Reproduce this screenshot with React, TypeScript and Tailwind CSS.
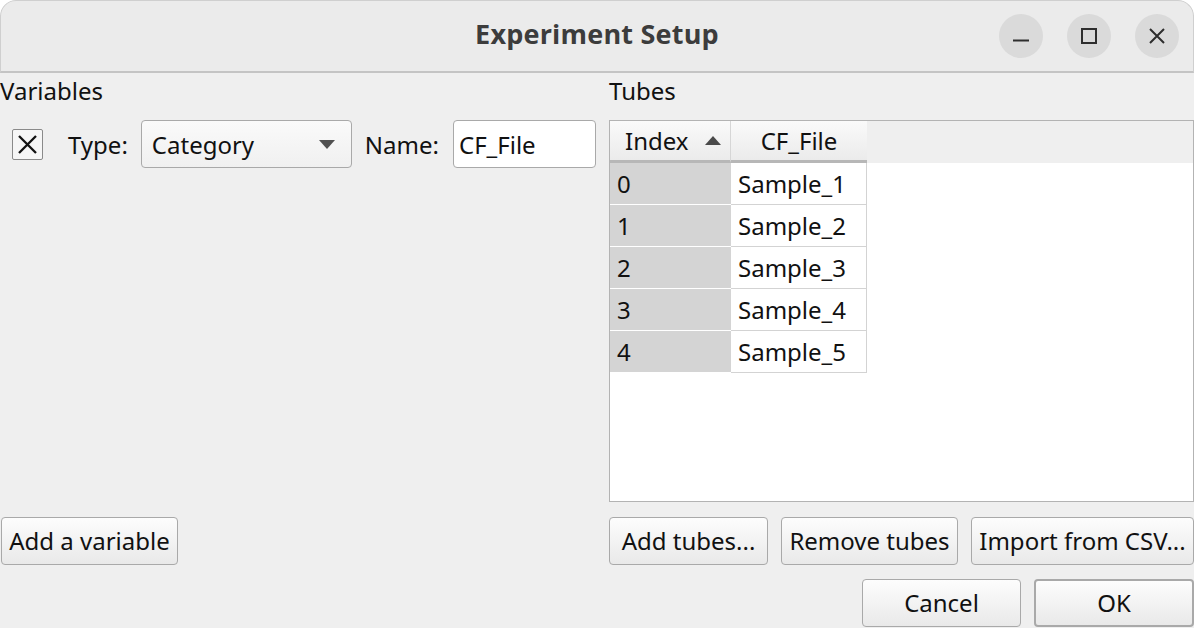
import React from "react";

const rows = ["Sample_1", "Sample_2", "Sample_3", "Sample_4", "Sample_5"];

const btn =
  "h-[48px] shrink-0 rounded-[4px] border border-[#a9a9a9] bg-gradient-to-b from-[#fdfdfd] to-[#e9e9e9] text-[24px] leading-none text-[#111] flex items-center justify-center";

const WinButton: React.FC<{ children: React.ReactNode }> = ({ children }) => (
  <div className="w-[44px] h-[44px] rounded-full bg-[#dadada] flex items-center justify-center">{children}</div>
);

const App: React.FC = () => {
  return (
    <div className="w-[1194px] h-[628px] bg-white overflow-hidden" style={{ fontFamily: '"Noto Sans", "Open Sans", sans-serif' }}>
      <div className="w-full h-full rounded-t-[16px] bg-[#efefef] overflow-hidden flex flex-col">
        {/* title bar */}
        <div className="h-[73px] shrink-0 bg-[#ebebeb] border-b-2 border-[#c4c4c4] rounded-t-[16px] border-t border-x border-t-[#cfcfcf] border-x-[#cfcfcf] relative flex items-center justify-center pb-[3px]">
          <span className="text-[27px] font-bold text-[#3c3c3c] tracking-[0.2px]" style={{ fontFamily: '"Open Sans", "Noto Sans", sans-serif' }}>
            Experiment Setup
          </span>
          <div className="absolute right-[14px] top-[13px] flex gap-[24px]">
            <WinButton>
              <svg width="18" height="18" viewBox="0 0 18 18">
                <line x1="1" y1="13.5" x2="17" y2="13.5" stroke="#2e2e2e" strokeWidth="2" />
              </svg>
            </WinButton>
            <WinButton>
              <svg width="18" height="18" viewBox="0 0 18 18">
                <rect x="2" y="2" width="14" height="14" fill="none" stroke="#2e2e2e" strokeWidth="2" />
              </svg>
            </WinButton>
            <WinButton>
              <svg width="18" height="18" viewBox="0 0 18 18">
                <path d="M2 2 L16 16 M16 2 L2 16" stroke="#2e2e2e" strokeWidth="2" />
              </svg>
            </WinButton>
          </div>
        </div>

        {/* body */}
        <div className="flex h-[492px] text-[24px] text-[#111]">
          {/* left */}
          <div className="w-[609px] shrink-0 flex flex-col">
            <div className="h-[36px] mb-[11px] flex items-center">Variables</div>
            <div className="h-[48px] flex items-center">
              <div className="ml-[12px] w-[31px] h-[31px] border border-[#8a8a8a] rounded-[2px] bg-[#f6f6f6] flex items-center justify-center">
                <svg width="23" height="23" viewBox="0 0 23 23">
                  <path d="M3 3 L20 20 M20 3 L3 20" stroke="#111" strokeWidth="2.3" />
                </svg>
              </div>
              <span className="ml-[25px] pt-[2px]">Type:</span>
              <div className="ml-[13px] w-[211px] h-[48px] rounded-[4px] border border-[#a9a9a9] bg-gradient-to-b from-[#fafafa] to-[#f0f0f0] flex items-center pl-[10px] pr-[16px] justify-between">
                <span className="pt-[2px]">Category</span>
                <svg width="16" height="9" viewBox="0 0 16 9">
                  <path d="M0 0 L16 0 L8 9 Z" fill="#505050" />
                </svg>
              </div>
              <span className="ml-[13px] pt-[2px]">Name:</span>
              <div className="ml-[14px] w-[143px] h-[48px] rounded-[4px] border border-[#a9a9a9] bg-white flex items-center pl-[5px] pt-[2px]">CF_File</div>
            </div>
            <div className="flex-1" />
            <div className={btn + " ml-[1px] w-[177px]"}>Add a variable</div>
          </div>

          {/* right */}
          <div className="w-[585px] shrink-0 flex flex-col">
            <div className="h-[36px] mb-[11px] flex items-center">Tubes</div>
            <div className="h-[382px] border border-[#b3b3b3] bg-white flex flex-col">
              <div className="h-[42px] flex bg-[#efefef] shrink-0">
                <div className="w-[121px] h-full border-r border-[#d6d6d6] border-b-[3px] border-b-[#b7b7b7] bg-gradient-to-b from-[#fafafa] to-[#ebebeb] flex items-center pl-[15px] pr-[9px] justify-between">
                  <span>Index</span>
                  <svg width="16" height="9" viewBox="0 0 16 9">
                    <path d="M0 9 L16 9 L8 0 Z" fill="#4a4a4a" />
                  </svg>
                </div>
                <div className="w-[136px] h-full border-b-[3px] border-b-[#b7b7b7] bg-gradient-to-b from-[#fafafa] to-[#ebebeb] flex items-center justify-center">
                  CF_File
                </div>
              </div>
              {rows.map((r, i) => (
                <div key={r} className="h-[42px] flex">
                  <div className="w-[121px] bg-[#d4d4d4] border-b border-white pl-[7px] flex items-center">{i}</div>
                  <div className="w-[136px] border-b border-r border-[#d3d3d3] pl-[7px] flex items-center">{r}</div>
                </div>
              ))}
            </div>
            <div className="flex mt-[15px] gap-[13px]">
              <div className={btn + " w-[159px]"}>Add tubes...</div>
              <div className={btn + " w-[177px]"}>Remove tubes</div>
              <div className={btn + " w-[223px]"}>Import from CSV...</div>
            </div>
          </div>
        </div>

        {/* footer */}
        <div className="flex justify-end gap-[13px] mt-[14px] text-[24px]">
          <div className={btn + " w-[159px]"}>Cancel</div>
          <div className={btn + " w-[160px] border-[#3a74a8] border-2"}>OK</div>
        </div>
      </div>
    </div>
  );
};

export default App;
